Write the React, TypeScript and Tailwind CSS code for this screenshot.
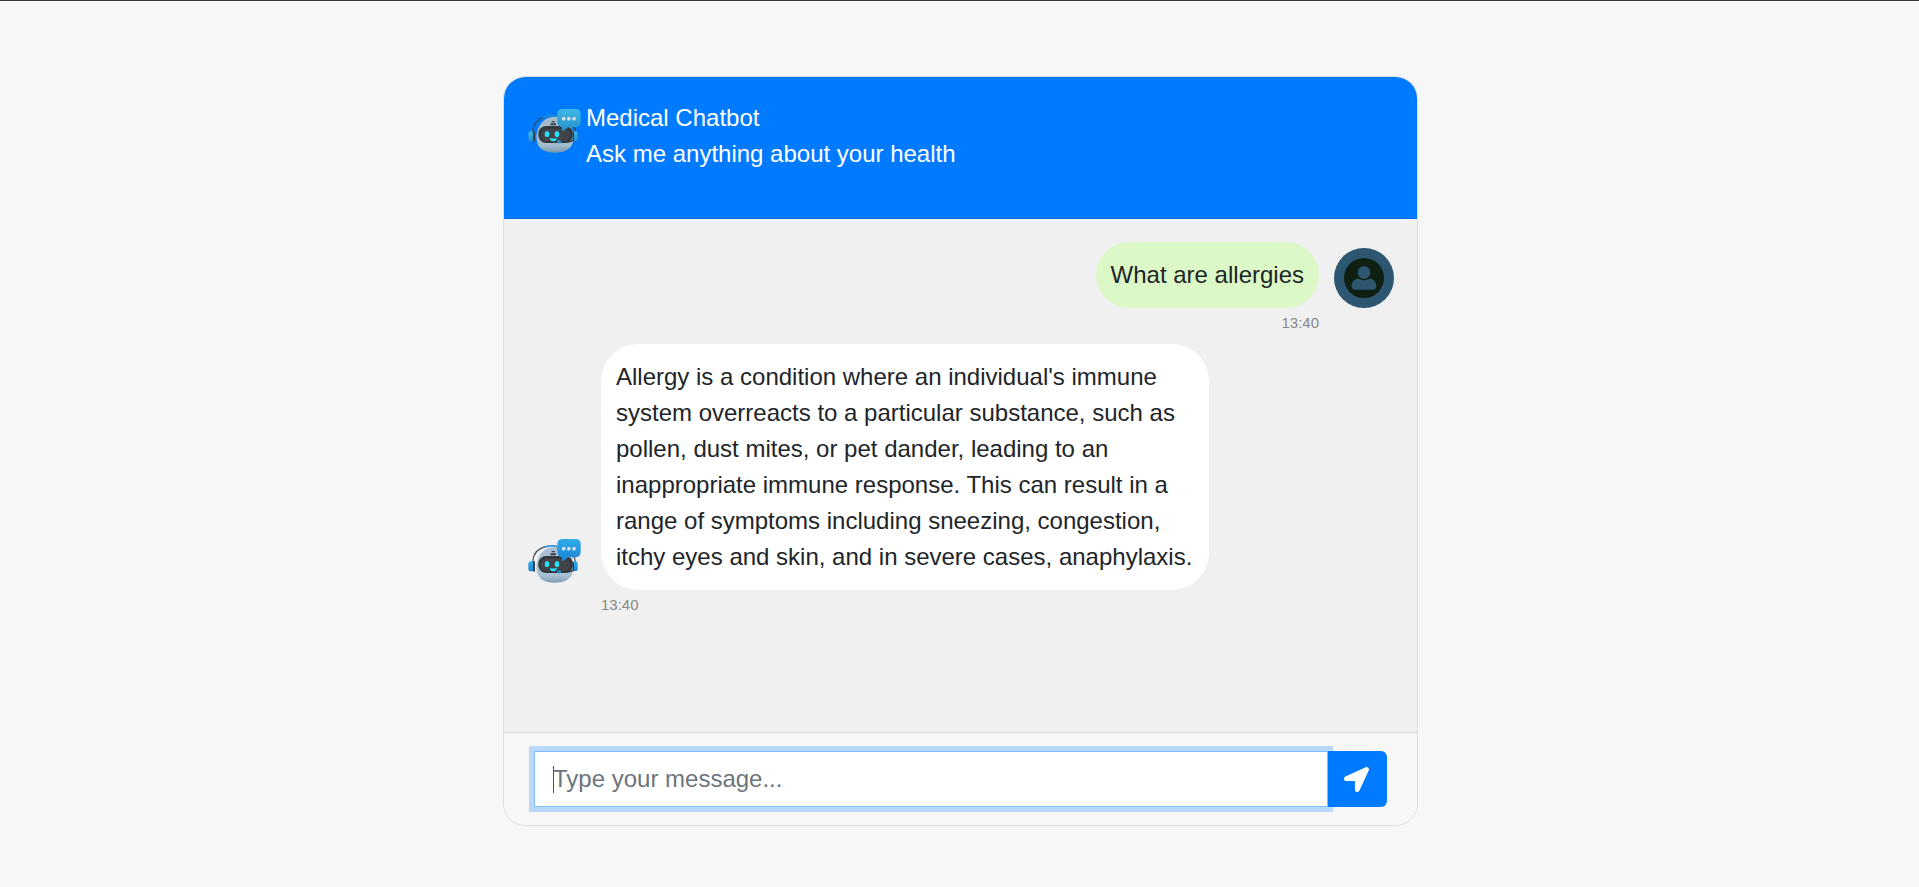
import { FaLocationArrow } from "react-icons/fa";

type RobotProps = { id: string; top: string; bottom: string; shell: string; shellEdge: string; className?: string };

function Robot({ id, top, bottom, shell, shellEdge, className = "" }: RobotProps) {
  return (
    <svg viewBox="39 42 162 132" width={54} height={44} className={`block shrink-0 ${className}`} aria-hidden="true">
      <defs>
        <linearGradient id={`${id}-blue`} x1="0" y1="0" x2="0" y2="1">
          <stop offset="0" stopColor={top} />
          <stop offset="1" stopColor={bottom} />
        </linearGradient>
        <linearGradient id={`${id}-shell`} x1="0" y1="0" x2="0" y2="1">
          <stop offset="0" stopColor={shell} />
          <stop offset="0.8" stopColor={shell} />
          <stop offset="1" stopColor={shellEdge} />
        </linearGradient>
      </defs>
      <path d="M120 65C142 65 158 74 167 94C174 108 176 120 175 134C173 160 150 173 120 173C88 173 67 160 65 134C63 120 66 106 73 94C82 76 98 65 120 65Z" fill={`url(#${id}-shell)`} />
      <path d="M53 112C54 88 68 71 90 66" fill="none" stroke="#3c4c5c" strokeWidth="3.500" />
      <path d="M84 67C98 62 114 61 128 64" fill="none" stroke={bottom} strokeWidth="4" />
      <path d="M174 92Q181 100 181 112" fill="none" stroke="#3c4752" strokeWidth="4" />
      <rect x="110" y="78" width="10" height="4" rx="1" fill="#3b4048" />
      <rect x="106" y="85" width="17" height="6" rx="1" fill="#3b4048" />
      <rect x="70" y="93" width="104" height="51" rx="24" fill="#34373c" />
      <rect x="77" y="101" width="88" height="37" rx="17" fill="#414449" />
      <rect x="89.500" y="109" width="13" height="17" rx="5" fill="#26dff8" />
      <rect x="119.500" y="109" width="13" height="17" rx="5" fill="#26dff8" />
      <path d="M104 128Q115 133 126 128C125 135 121 139 115 139C109 139 105 135 104 128Z" fill="#26dff8" />
      <rect x="40" y="109" width="17" height="30" rx="8" fill={`url(#${id}-blue)`} />
      <rect x="54" y="108" width="6" height="32" rx="3" fill="#34414d" />
      <rect x="173" y="109" width="15" height="30" rx="7" fill={`url(#${id}-blue)`} />
      <path d="M175 112V136Q162 143 138 140" fill="none" stroke="#34383f" strokeWidth="4" />
      <ellipse cx="132" cy="140" rx="6.500" ry="5" fill={bottom} />
      <path d="M143 42H182Q197 42 197 57V81Q197 96 182 97H160L146 107Q141 109 141 104L140 97Q127 93 127 81V57Q127 42 143 42Z" fill={`url(#${id}-blue)`} />
      <circle cx="146" cy="71" r="5.5" fill="#d8e2e8" />
      <circle cx="161.500" cy="71" r="5.5" fill="#d8e2e8" />
      <circle cx="177" cy="71" r="5.5" fill="#d8e2e8" />
    </svg>
  );
}

function UserAvatar() {
  return (
    <svg viewBox="0 0 60 60" width={60} height={60} className="block shrink-0" aria-hidden="true">
      <circle cx="30" cy="30" r="30" fill="#2d5670" />
      <circle cx="30" cy="30" r="20" fill="#0f1f12" />
      <path d="M23.800 30.500Q30 34 36.200 30.500C40 31.500 42.300 34.500 42.300 38Q42.300 41.800 39 41.800H21Q17.700 41.800 17.700 38C17.700 34.500 20 31.500 23.800 30.500Z" fill="#2d5670" />
      <circle cx="30" cy="24.500" r="6.700" fill="#2d5670" stroke="#0f1f12" strokeWidth="0.800" />
    </svg>
  );
}

export default function App() {
  return (
    <div className="h-[887px] w-full overflow-hidden border-t border-[#37343c] bg-[#f7f7f7] pt-[75px] font-['Liberation_Sans',Arial,sans-serif] text-2xl leading-9 text-[#212529]">
      <main className="ml-[503px] flex h-[750px] w-[915px] flex-col overflow-hidden rounded-[22.5px] border border-[#dedede] bg-[#f7f7f7]">
        <header className="flex h-[142px] shrink-0 items-start border-b border-[#006fe0] bg-[#007bff] pt-[23px] pl-6 text-white">
          <Robot id="header" top="#3fb8e6" bottom="#2590cc" shell="#a3bccb" shellEdge="#7397ad" className="mt-[9px]" />
          <div className="ml-1">
            <h1>Medical Chatbot</h1>
            <p>Ask me anything about your health</p>
          </div>
        </header>

        <section className="flex-1 bg-[#f0f0f0] pt-[23px]">
          <div className="mr-[23px] flex items-start justify-end">
            <div>
              <p className="rounded-[37.5px] bg-[#dcf8c6] p-[15px]">What are allergies</p>
              <time className="mt-1 block text-right text-[15px] leading-[22px] text-[#888]">13:40</time>
            </div>
            <div className="mt-1.5 ml-[15px]">
              <UserAvatar />
            </div>
          </div>

          <div className="mt-[10px] ml-6 flex items-start">
            <Robot id="reply" top="#2fade9" bottom="#1a85d6" shell="#a9c1d4" shellEdge="#7d9cb8" className="mt-[195px]" />
            <div className="ml-[19px]">
              <p className="w-[608px] rounded-[37.5px] bg-white p-[15px]">
                Allergy is a condition where an individual's immune system overreacts to a particular substance, such as pollen, dust mites, or pet dander, leading to an inappropriate immune response. This can result in a range of symptoms including sneezing, congestion, itchy eyes and skin, and in severe cases, anaphylaxis.
              </p>
              <time className="mt-1 block text-[15px] leading-[22px] text-[#888]">13:40</time>
            </div>
          </div>
        </section>

        <footer className="flex h-[93px] shrink-0 items-start border-t border-[#d9d9d9] bg-[#f7f7f7] pt-[18px] pl-[30px]">
          <div className="relative">
            <input
              type="text"
              placeholder="Type your message..."
              aria-label="Message"
              className="block h-14 w-[794px] border border-[#80bdff] bg-white px-[18px] caret-transparent shadow-[0_0_0_5px_#b9d9fa] outline-none placeholder:text-[#6c757d] placeholder:opacity-100"
            />
            <span className="absolute top-[15px] left-[19px] h-[27px] w-px bg-[#495057]" />
          </div>
          <button type="button" aria-label="Send" className="relative flex h-14 w-[59px] items-center rounded-r-md bg-[#007bff] pl-4 text-white">
            <FaLocationArrow className="size-[25px]" />
          </button>
        </footer>
      </main>
    </div>
  );
}
